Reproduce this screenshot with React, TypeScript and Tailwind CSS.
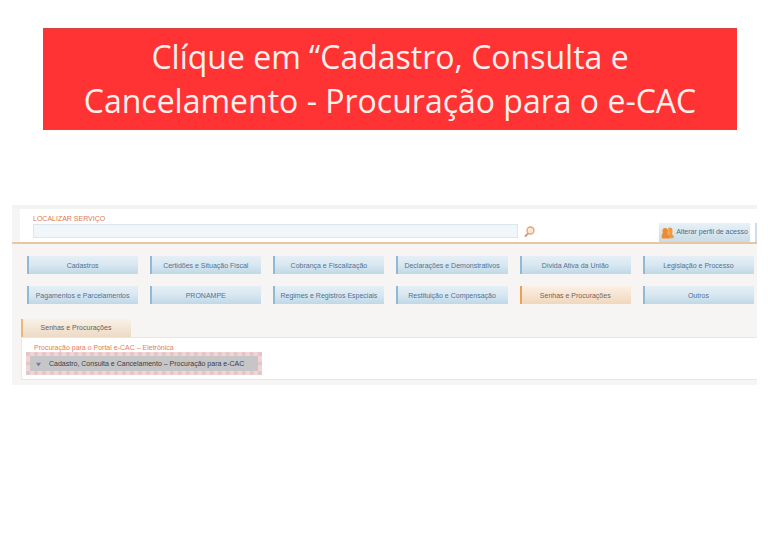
import clsx from "clsx";

const services = [
  { label: "Cadastros" },
  { label: "Certidões e Situação Fiscal" },
  { label: "Cobrança e Fiscalização" },
  { label: "Declarações e Demonstrativos" },
  { label: "Dívida Ativa da União" },
  { label: "Legislação e Processo" },
  { label: "Pagamentos e Parcelamentos" },
  { label: "PRONAMPE" },
  { label: "Regimes e Registros Especiais" },
  { label: "Restituição e Compensação" },
  { label: "Senhas e Procurações", active: true },
  { label: "Outros" },
];

function SearchIcon() {
  return (
    <svg viewBox="0 0 22 24" className="h-3 w-[11px]" aria-hidden="true">
      <path d="M9 14 L3 20" stroke="#d09a86" strokeWidth="4" strokeLinecap="round" />
      <circle cx="13" cy="9" r="7" fill="#fbe3cc" stroke="#e8a272" strokeWidth="2.6" />
      <path d="M9 9 a4 4 0 0 1 4 -4" fill="none" stroke="#ffffff" strokeWidth="2" />
    </svg>
  );
}

function ProfileIcon() {
  return (
    <svg viewBox="0 0 26 24" className="h-3 w-[13px]" aria-hidden="true">
      <path d="M13 8 q0 -7 5 -7 q5 0 5 6 q0 4 -1 7 l3 4 q1 2 0 4 l-10 1 z" fill="#ee9a40" />
      <path d="M3 8 q0 -6 5 -6 q6 0 6 6 q0 4 -1 6 l3 2 q2 4 0 7 l-14 0 q-2 -5 0 -9 l2 -1 q-1 -2 -1 -5 z" fill="#ef8b2c" />
      <path d="M14 4 l2 9 l-1 3" fill="none" stroke="#f8c184" strokeWidth="1.5" />
    </svg>
  );
}

function ServiceButton({ label, active }: { label: string; active?: boolean }) {
  return (
    <button
      type="button"
      className={clsx(
        "h-[18px] min-w-0 whitespace-nowrap border-l-2 pr-[2px] text-center text-[7px] leading-none",
        active
          ? "border-[#eda052] bg-linear-to-b from-[#fbf0e4] to-[#f0d7bd] text-[#75655e]"
          : "border-[#91b9d4] bg-linear-to-b from-[#e5eff5] via-[#d8e7f1] to-[#bfd8e7] text-[#557292]",
      )}
    >
      {label}
    </button>
  );
}

export default function App() {
  return (
    <main className="min-h-screen bg-white pt-7 font-['Liberation_Sans',Arial,sans-serif]">
      <header className="mr-[31px] ml-[43px] border-y border-[#dc4347] bg-[#ff3234] px-8 py-[6px]">
        <h1 className="text-center font-['Open_Sans','Noto_Sans',sans-serif] text-[32px] leading-[44px] font-normal text-[#fff0ec]">
          Clíque em “Cadastro, Consulta e Cancelamento - Procuração para o e-CAC
        </h1>
      </header>

      <section className="mt-[75px] mr-[11px] ml-3 bg-[#f6f5f3] pb-[5px]">
        <div className="border-t-4 border-b-2 border-t-[#f3f3f2] border-b-[#e6c7a1] pl-2">
          <div className="flex h-[33px] items-end bg-white pl-[13px]">
            <form className="flex flex-1 items-end pb-1">
              <div className="flex-1">
                <label htmlFor="servico" className="block text-[7px] leading-[10px] text-[#dd7850]">
                  LOCALIZAR SERVIÇO
                </label>
                <input
                  id="servico"
                  type="text"
                  className="block h-[14px] w-full border border-[#dbe7ed] bg-[#f1f6fa] px-1 text-[7px] outline-none"
                />
              </div>
              <button type="submit" aria-label="Localizar" className="ml-[6px]">
                <SearchIcon />
              </button>
            </form>
            <button
              type="button"
              className="ml-[124px] flex h-[19px] w-[91px] items-center justify-center gap-[2px] bg-linear-to-b from-[#e9f1f6] to-[#c8dce8] text-[7px] whitespace-nowrap text-[#4f6a86]"
            >
              <ProfileIcon />
              Alterar perfil de acesso
            </button>
            <span className="ml-[5px] h-[19px] w-[2px] bg-[#cfdfe9]" />
          </div>
        </div>

        <nav className="mt-3 mr-[3px] ml-[15px] grid grid-cols-6 gap-3">
          {services.map((service) => (
            <ServiceButton key={service.label} {...service} />
          ))}
        </nav>

        <div className="mt-[15px] ml-[9px]">
          <h2 className="flex h-[18px] w-[110px] items-center justify-center border-l-2 border-[#e9b878] bg-linear-to-b from-[#f9f1e7] to-[#ecdac4] pr-[2px] text-[7px] text-[#6b5f57]">
            Senhas e Procurações
          </h2>
          <div className="border-y border-l border-y-[#f0e4d8] border-l-[#f1e8dc] bg-white pt-[5px] pb-1 pl-1">
            <h3 className="pl-2 text-[7px] leading-[9px] text-[#df8055]">
              Procuração para o Portal e-CAC – Eletrônica
            </h3>
            <a
              href="#procuracao"
              className="flex h-[23px] w-[236px] border-4 border-dotted border-[#dec6c9] bg-[#f3d3d3] text-[7px] whitespace-nowrap text-[#3c3c40]"
            >
              <span className="flex flex-1 items-center gap-2 bg-[#c7c6c7] pt-[2px] pl-[6px]">
                <svg viewBox="0 0 8 8" className="h-[5px] w-[5px]" aria-hidden="true">
                  <path d="M0 1 h8 l-4 6 z" fill="#6a83a5" />
                </svg>
                Cadastro, Consulta e Cancelamento – Procuração para e-CAC
              </span>
            </a>
          </div>
        </div>
      </section>
    </main>
  );
}
